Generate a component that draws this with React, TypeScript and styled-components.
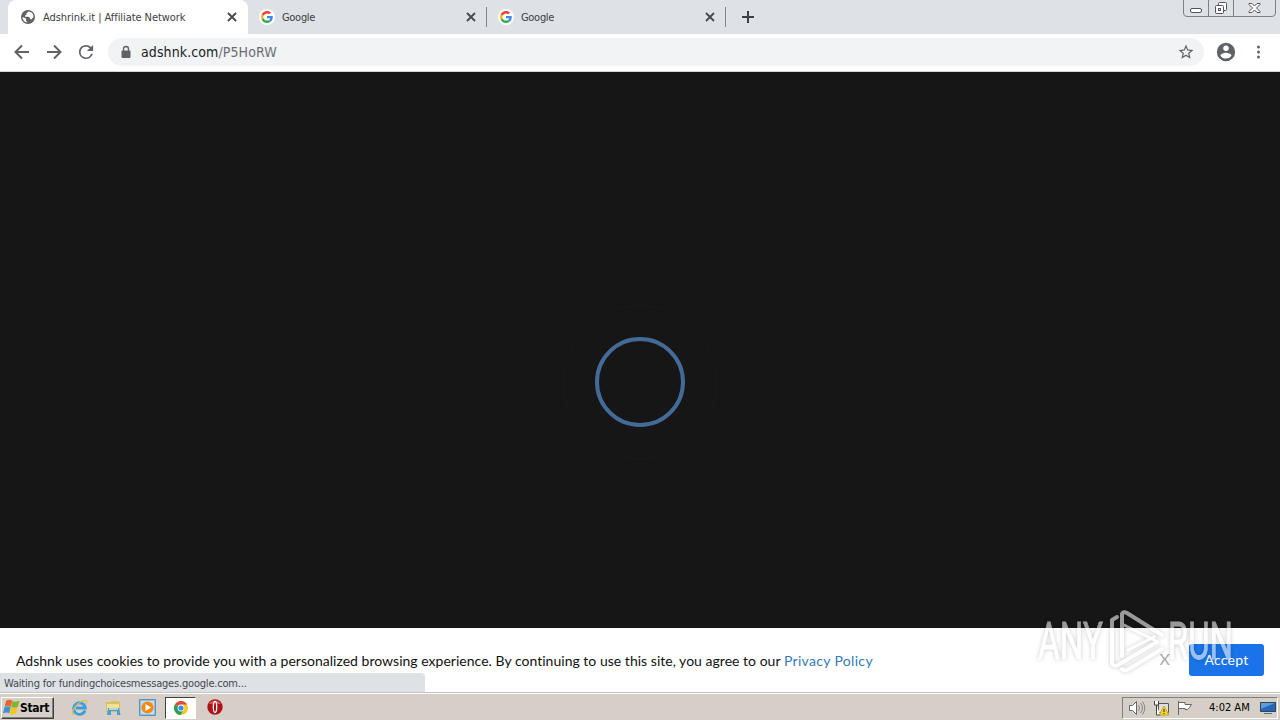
import React from "react";
import styled, { createGlobalStyle } from "styled-components";

const Global = createGlobalStyle`
  *{box-sizing:border-box}
  body{margin:0;overflow:hidden;background:#fff;font-family:"DejaVu Sans Condensed","DejaVu Sans",sans-serif}
  svg{display:block;flex:none}
`;
const Screen = styled.div`width:1280px;height:720px;display:flex;flex-direction:column;position:relative;overflow:hidden;`;
const TabStrip = styled.div`height:34px;flex:none;background:#dee1e6;display:flex;padding-left:8px;position:relative;`;
const Tab = styled.div<{ $active?: boolean }>`
  width:${p => (p.$active ? 240 : 239)}px;height:34px;display:flex;align-items:center;
  padding:0 8px 0 ${p => (p.$active ? 12 : 11)}px;
  background:${p => (p.$active ? "#fff" : "transparent")};
  border-radius:8px 8px 0 0;
`;
const TabTitle = styled.span<{ $ls: number }>`
  flex:1;margin-left:7px;font-size:11px;line-height:16px;padding-top:1px;color:#3c4043;letter-spacing:${p => p.$ls}px;white-space:nowrap;
`;
const Divider = styled.i`width:1px;height:20px;margin-top:7px;margin-left:-1px;background:#80868b;`;
const NewTab = styled.div`padding:10px 0 0 15px;`;
const WindowControls = styled.div`
  position:absolute;left:1183px;top:-1px;width:93px;height:18px;display:flex;border:1px solid #7c8089;border-radius:0 0 4px 4px;
`;
const ControlCell = styled.div<{ $w: number }>`
  width:${p => p.$w}px;display:flex;justify-content:center;align-items:center;
  & + &{border-left:1px solid #7c8089}
`;
const Toolbar = styled.div`height:38px;flex:none;background:#fff;border-bottom:1px solid #d4d5d8;display:flex;align-items:center;padding:0 0 1px 14px;`;
const NavIcons = styled.div`display:flex;gap:16px;width:94px;`;
const Omnibox = styled.div`height:28px;width:1096px;border-radius:14px;background:#f1f3f4;display:flex;align-items:center;padding:0 9px 0 12px;`;
const Url = styled.span`flex:1;margin-left:9px;font:14px/20px "DejaVu Sans Condensed","DejaVu Sans",sans-serif;letter-spacing:.1px;color:#202124;`;
const UrlPath = styled.span`color:#6a6e73;`;
const Page = styled.main`height:556px;flex:none;background:#161616;display:flex;align-items:center;justify-content:center;padding-top:64px;`;
const Halo = styled.div`width:154px;height:154px;border:1px solid #1a1a1a;border-radius:50%;display:flex;align-items:center;justify-content:center;`;
const Ring = styled.div`width:90px;height:90px;border:4px solid #436b97;border-radius:50%;`;
const CookieBar = styled.div`height:64px;flex:none;background:#fff;display:flex;align-items:center;padding:2px 16px 0;font-family:Lato,sans-serif;`;
const CookieText = styled.p`margin:0;flex:1;font-size:14px;line-height:20px;color:#111;letter-spacing:.02px;white-space:nowrap;`;
const PolicyLink = styled.a`color:#337ab7;letter-spacing:.33px;`;
const Dismiss = styled.span`font:16px/20px Lato,sans-serif;color:#aaa;margin:-4px 19px 0 0;`;
const Accept = styled.button`
  width:75px;height:32px;margin-top:-3px;border:0;border-radius:3px;background:#1a73e8;color:#fff;font:14px/20px Lato,sans-serif;letter-spacing:.2px;padding:0;
`;
const StatusBubble = styled.div`
  position:absolute;left:0;top:673px;width:425px;height:19px;background:#dee1e6;border-radius:0 4px 0 0;
  padding-left:4px;font-size:11px;line-height:22px;color:#45484c;letter-spacing:-.19px;white-space:nowrap;
`;
const Taskbar = styled.div`height:28px;flex:none;background:#d6cfc7;border-top:1px solid #c6c4bf;box-shadow:inset 0 1px #fff;display:flex;align-items:center;padding:1px 2px 0 1px;`;
const Start = styled.div`
  width:53px;height:22px;margin-top:1px;border:1px solid;border-color:#fff #404040 #404040 #fff;box-shadow:inset -1px -1px #808080;
  display:flex;align-items:center;padding-left:1px;gap:0;font:bold 12px/18px "DejaVu Sans Condensed",sans-serif;letter-spacing:-.35px;color:#000;
`;
const QuickLaunch = styled.div`display:flex;align-items:center;margin-left:17px;gap:17px;flex:1;`;
const ActiveTask = styled.div`
  width:31px;height:22px;margin:1px -7px 0 -8px;background:#fff;border:1px solid;border-color:#404040 #fff #fff #404040;display:flex;align-items:center;justify-content:center;
`;
const Tray = styled.div`width:156px;height:22px;margin-top:1px;border:1px solid;border-color:#808080 #fff #fff #808080;display:flex;align-items:center;padding-left:5px;`;
const TrayIcons = styled.div`display:flex;gap:7px;`;
const Clock = styled.span`margin-left:16px;width:51px;font-size:11px;line-height:18px;color:#000;letter-spacing:0;white-space:nowrap;`;
const Watermark = styled.svg`position:absolute;left:1030px;top:604px;filter:drop-shadow(0 0 2px rgba(0,0,0,.38));opacity:.56;`;

const CloseIcon = () => (
  <svg width="16" height="16" viewBox="0 0 16 16" stroke="#45484c" strokeWidth="1.8"><path d="M4 4l8 8M12 4l-8 8" /></svg>
);
const StarIcon = () => (
  <svg width="18" height="18" viewBox="0 0 24 24" fill="#5f6368"><path d="M22 9.240l-7.190-.62L12 2 9.190 8.630 2 9.240l5.460 4.730L5.820 21 12 17.270 18.180 21l-1.630-7.030zM12 15.400l-3.760 2.270 1-4.280-3.320-2.880 4.380-.38L12 6.100l1.710 4.040 4.380.38-3.320 2.880 1 4.280z" /></svg>
);
const GoogleIcon = () => (
  <svg width="16" height="16" viewBox="-8 -8 64 64">
    <circle cx="24" cy="24" r="32" fill="#fff" />
    <path fill="#EA4335" d="M24 9.5c3.54 0 6.71 1.22 9.21 3.6l6.85-6.85C35.9 2.38 30.47 0 24 0 14.62 0 6.51 5.38 2.56 13.22l7.98 6.19C12.43 13.72 17.74 9.5 24 9.5z" />
    <path fill="#4285F4" d="M46.98 24.55c0-1.57-.15-3.09-.38-4.55H24v9.02h12.94c-.58 2.96-2.26 5.48-4.78 7.18l7.73 6c4.51-4.18 7.09-10.36 7.09-17.65z" />
    <path fill="#FBBC05" d="M10.53 28.59A14.5 14.5 0 0 1 9.77 24c0-1.6.27-3.14.76-4.59l-7.98-6.19A24 24 0 0 0 0 24c0 3.88.92 7.54 2.56 10.78z" />
    <path fill="#34A853" d="M24 48c6.48 0 11.93-2.13 15.89-5.81l-7.73-6c-2.15 1.45-4.92 2.3-8.16 2.3-6.26 0-11.57-4.22-13.47-9.91l-7.98 6.19C6.51 42.62 14.62 48 24 48z" />
  </svg>
);
const WindowsFlag = () => (
  <svg width="17" height="17" viewBox="0 0 16 16">
    <path fill="#e9632d" d="M3 1.700C5 .4 6.800.4 8.700 1.500L7.300 7.200C5.400 6.200 3.800 6.200 1.600 7.200z" />
    <path fill="#80b52d" d="M9 1.800C11 2.900 13 2.700 15.500 1.500L14 7.400C11.800 8.500 9.900 8.500 7.600 7.500z" />
    <path fill="#3f91d2" d="M1.500 7.600C3.500 6.600 5.200 6.700 7.200 7.700L5.800 13.500C4 12.500 2.300 12.500 0 13.500z" />
    <path fill="#f4c51c" d="M7.500 8C9.600 9 11.500 9 13.800 7.900L12.400 13.700C10.200 14.800 8.300 14.800 6.100 13.900z" />
  </svg>
);
const IeIcon = () => (
  <svg width="17" height="17" viewBox="0 0 17 17" fill="none">
    <path d="M14 11.500A5.800 5.800 0 1 1 14.300 9H5" stroke="#3b9fdb" strokeWidth="2.800" />
    <path d="M3 15.800C-1.500 15 5 4.500 12 1.800c4-1.500 4.500.5 3.300 2.800" stroke="#e5bc48" strokeWidth="1.200" />
  </svg>
);
const FolderIcon = () => (
  <svg width="17" height="17" viewBox="0 0 17 17">
    <path fill="#dcbf5f" d="M1 3h5l1-1h7l1 2v9H1z" /><path fill="#f4e196" d="M2 5h12v7H2z" />
    <path fill="#4f9fce" d="M3 9h11l1.500 7H12v-4H6v4H2z" /><path fill="#a9d8ee" d="M4 9h9v2H4z" />
  </svg>
);
const PlayerIcon = () => (
  <svg width="17" height="17" viewBox="0 0 17 17">
    <path fill="#8ebfe4" stroke="#5b91bd" d="M.5.500h16v16H.5z" /><path fill="#c4dff2" d="M2 2h13v13H2z" />
    <circle cx="8.500" cy="8.500" r="6.100" fill="#f28a13" /><path fill="#fff" d="M6.500 5v7l5.500-3.500z" />
  </svg>
);
const ChromeIcon = () => (
  <svg width="14" height="14" viewBox="0 0 14 14">
    <circle cx="7" cy="7" r="7" fill="#fbc916" />
    <path fill="#dd4b3e" d="M7 7L.94 3.500A7 7 0 0 1 13.060 3.500H7z" />
    <path fill="#25a259" d="M7 7L.94 3.500A7 7 0 0 0 6.500 14L10 8.500z" />
    <circle cx="7" cy="7" r="3.400" fill="#fff" /><circle cx="7" cy="7" r="2.600" fill="#4285f4" />
  </svg>
);
const OperaIcon = () => (
  <svg width="17" height="16" viewBox="-1 0 17 16">
    <circle cx="8" cy="8" r="7.700" fill="#b01116" /><path d="M2 5a6.800 6.800 0 0 1 12 0z" fill="#d9555a" />
    <ellipse cx="8" cy="8" rx="1.700" ry="5.500" fill="#a51116" stroke="#fff" strokeWidth="1.300" />
  </svg>
);

export default function App() {
  return (
    <Screen>
      <Global />
      <TabStrip>
        <Tab $active>
          <svg width="16" height="16" viewBox="0 0 16 16"><circle cx="8" cy="8" r="7" fill="#5f6368" /><path d="M9 2.500L6.500 4v1.500L5 6.500v1.200h3.500L10 9v1.200h1.500L13.500 8A5.600 5.600 0 0 0 9 2.500zM2.500 8L6 9.500v2l1.500 2A5.600 5.600 0 0 1 2.500 8z" fill="#fff" /></svg>
          <TabTitle $ls={-0.07}>Adshrink.it | Affiliate Network</TabTitle><CloseIcon />
        </Tab>
        <Tab><GoogleIcon /><TabTitle $ls={-0.3}>Google</TabTitle><CloseIcon /></Tab>
        <Divider />
        <Tab><GoogleIcon /><TabTitle $ls={-0.3}>Google</TabTitle><CloseIcon /></Tab>
        <Divider />
        <NewTab><svg width="14" height="14" viewBox="0 0 14 14" stroke="#3c4043" strokeWidth="2"><path d="M7 1v12M1 7h12" /></svg></NewTab>
        <WindowControls>
          <ControlCell $w={24}><svg width="14" height="16" viewBox="0 0 14 16"><rect x="1.500" y="8.500" width="11" height="4" rx="1.500" fill="#fff" stroke="#50545c" /></svg></ControlCell>
          <ControlCell $w={25}><svg width="14" height="14" viewBox="0 0 14 14" fill="#fff" stroke="#50545c"><rect x="4.500" y="1.500" width="8" height="8" rx="1" /><rect x="1.500" y="4.500" width="8" height="8" rx="1" /><rect x="4.500" y="7.500" width="2" height="2" /></svg></ControlCell>
          <ControlCell $w={42}><svg width="13" height="12" viewBox="0 0 13 12"><path d="M1 1.500h3L6.500 4 9 1.500h3v1L8.500 6l3.500 3.500v1H9L6.500 8 4 10.500H1v-1L4.500 6 1 2.500z" fill="#fff" stroke="#50545c" /></svg></ControlCell>
        </WindowControls>
      </TabStrip>
      <Toolbar>
        <NavIcons>
          <svg width="16" height="16" viewBox="0 0 16 16" fill="none" stroke="#5f6368" strokeWidth="2"><path d="M15 8H2M8 1.500L1.500 8 8 14.500" /></svg>
          <svg width="16" height="16" viewBox="0 0 16 16" fill="none" stroke="#5f6368" strokeWidth="2"><path d="M1 8h13M8 1.500L14.500 8 8 14.500" /></svg>
          <svg width="16" height="16" viewBox="3 3 18 18" fill="#5f6368"><path d="M17.650 6.350A7.960 7.960 0 0 0 12 4a8 8 0 1 0 7.730 10h-2.080A6 6 0 1 1 12 6c1.660 0 3.140.69 4.220 1.780L13 11h7V4z" /></svg>
        </NavIcons>
        <Omnibox>
          <svg width="12" height="14" viewBox="0 0 12 14"><path d="M3.500 6V4a2.500 2.500 0 0 1 5 0v2" fill="none" stroke="#5f6368" strokeWidth="1.400" /><rect x="1.500" y="5.500" width="9" height="7.500" rx="1" fill="#5f6368" /></svg>
          <Url>adshnk.com<UrlPath>/P5HoRW</UrlPath></Url>
          <StarIcon />
        </Omnibox>
        <svg width="44" height="22" viewBox="-10 0 44 24" fill="#5f6368"><path d="M12 2a10 10 0 1 0 0 20 10 10 0 0 0 0-20zm0 3a3 3 0 1 1 0 6 3 3 0 0 1 0-6zm0 14.200a7.200 7.200 0 0 1-6-3.220c.03-1.990 4-3.080 6-3.080s5.970 1.090 6 3.080a7.200 7.200 0 0 1-6 3.220z" /></svg>
        <svg width="20" height="16" viewBox="0 0 20 16" fill="#5f6368"><circle cx="10.500" cy="3" r="1.500" /><circle cx="10.500" cy="8" r="1.500" /><circle cx="10.500" cy="13" r="1.500" /></svg>
      </Toolbar>
      <Page><Halo><Ring /></Halo></Page>
      <CookieBar>
        <CookieText>Adshnk uses cookies to provide you with a personalized browsing experience. By continuing to use this site, you agree to our <PolicyLink>Privacy Policy</PolicyLink></CookieText>
        <Dismiss>X</Dismiss>
        <Accept>Accept</Accept>
      </CookieBar>
      <StatusBubble>Waiting for fundingchoicesmessages.google.com...</StatusBubble>
      <Taskbar>
        <Start><WindowsFlag />Start</Start>
        <QuickLaunch><IeIcon /><FolderIcon /><PlayerIcon /><ActiveTask><ChromeIcon /></ActiveTask><OperaIcon /></QuickLaunch>
        <Tray>
          <TrayIcons>
            <svg width="18" height="16" viewBox="0 0 18 16" fill="#fff" stroke="#666"><path d="M1.500 5.500h3l4-4v13l-4-4h-3z" /><path d="M10.500 5q2 3 0 6M12.500 3q4 5 0 10M14.500 1.500q4.500 6.500 0 13" fill="none" stroke="#888" /></svg>
            <svg width="17" height="16" viewBox="0 0 17 16"><path d="M5.500 3.500h10v9h-10z" fill="#ddd" stroke="#555" /><path d="M1.500 1v4h4V1M3.500 5v10h4" fill="#fff" stroke="#444" /><path d="M11 6l5 9H6z" fill="#f7d521" stroke="#a98a12" strokeWidth=".6" /><path d="M11 9v3M11 13v1" stroke="#222" /></svg>
            <svg width="16" height="16" viewBox="0 0 16 16"><path d="M1.500 1v14M2 2.500h6v2h6.500l-2 3-2 2H8v-1H2" fill="#fff" stroke="#666" /></svg>
          </TrayIcons>
          <Clock>4:02 AM</Clock>
          <svg width="16" height="14" viewBox="0 0 16 14"><path d="M.5 1.500h15v9H.5z" fill="#2767b5" stroke="#345" /><path d="M1 2h14L1 8z" fill="#5c9be0" /><path d="M4 12h8v1H4z" fill="#5c6b80" /></svg>
        </Tray>
      </Taskbar>
      <Watermark width="210" height="76" viewBox="0 0 210 76">
        <g fill="#fff" stroke="#fff" strokeWidth=".8" fontFamily="Roboto,sans-serif" fontSize="51">
          <text x="8" y="55" textLength="65" lengthAdjust="spacingAndGlyphs">ANY</text>
          <text x="138" y="55" textLength="65" lengthAdjust="spacingAndGlyphs">RUN</text>
        </g>
        <g fill="none" stroke="#fff" strokeWidth="4" strokeLinejoin="round" strokeLinecap="round">
          <path d="M87 13L82 16V59Q83 63 88 61L127 38" />
          <path d="M92 52V10Q93 7 97 9L132 31" />
          <path d="M92 20L126 37M98 46L124 33" strokeWidth="3" />
          <path d="M92 65Q95 68 99 65L132 45" />
        </g>
      </Watermark>
    </Screen>
  );
}
